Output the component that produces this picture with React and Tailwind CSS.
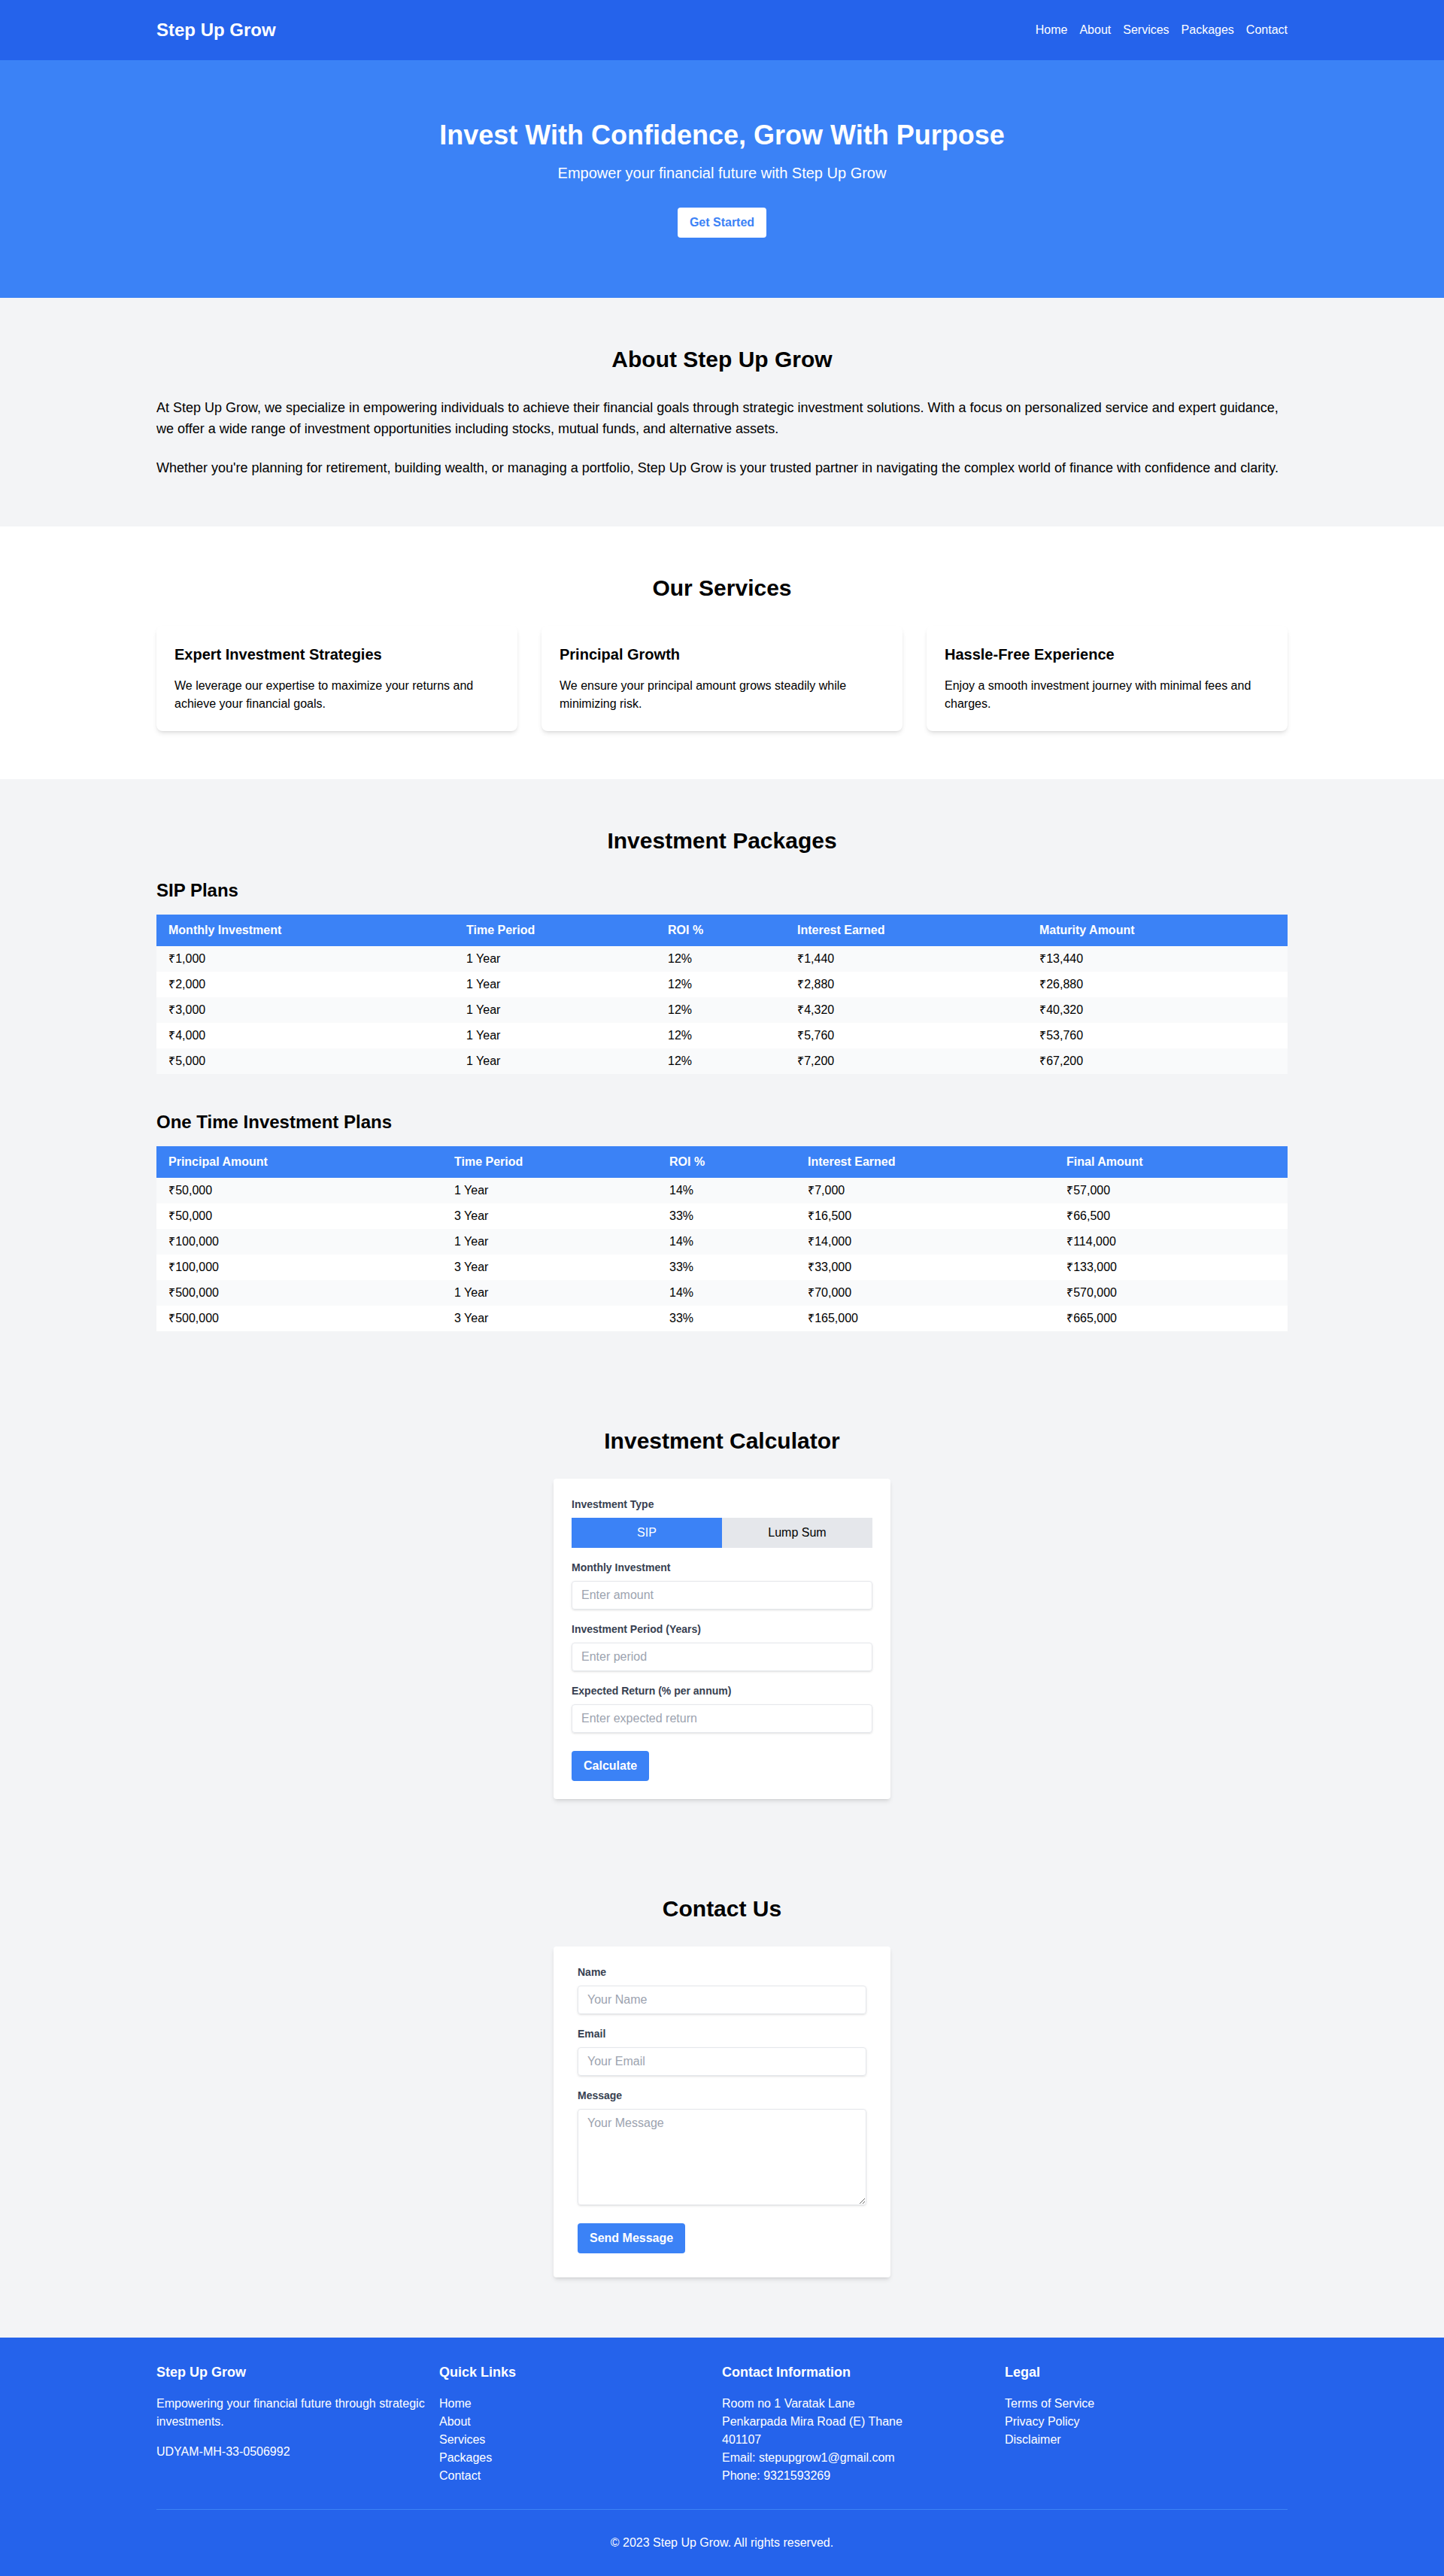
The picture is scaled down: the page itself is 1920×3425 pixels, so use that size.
import { useState } from "react";

const sipPlans = [
  ["₹1,000", "1 Year", "12%", "₹1,440", "₹13,440"],
  ["₹2,000", "1 Year", "12%", "₹2,880", "₹26,880"],
  ["₹3,000", "1 Year", "12%", "₹4,320", "₹40,320"],
  ["₹4,000", "1 Year", "12%", "₹5,760", "₹53,760"],
  ["₹5,000", "1 Year", "12%", "₹7,200", "₹67,200"],
];

const oneTimePlans = [
  ["₹50,000", "1 Year", "14%", "₹7,000", "₹57,000"],
  ["₹50,000", "3 Year", "33%", "₹16,500", "₹66,500"],
  ["₹100,000", "1 Year", "14%", "₹14,000", "₹114,000"],
  ["₹100,000", "3 Year", "33%", "₹33,000", "₹133,000"],
  ["₹500,000", "1 Year", "14%", "₹70,000", "₹570,000"],
  ["₹500,000", "3 Year", "33%", "₹165,000", "₹665,000"],
];

const services = [
  {
    title: "Expert Investment Strategies",
    text: "We leverage our expertise to maximize your returns and achieve your financial goals.",
  },
  {
    title: "Principal Growth",
    text: "We ensure your principal amount grows steadily while minimizing risk.",
  },
  {
    title: "Hassle-Free Experience",
    text: "Enjoy a smooth investment journey with minimal fees and charges.",
  },
];

const inputClass =
  "block shadow appearance-none border border-[#e5e7eb] rounded w-full py-2 px-3 text-[#374151] leading-tight placeholder:text-[#9ca3af] focus:outline-none";

function PlanTable({ headers, widths, rows }) {
  return (
    <table className="w-full table-fixed border-collapse">
      <thead>
        <tr className="bg-[#3b82f6] text-white">
          {headers.map((header, i) => (
            <th key={header} className={`${widths[i]} py-3 px-4 text-left font-bold leading-[18px]`}>
              {header}
            </th>
          ))}
        </tr>
      </thead>
      <tbody>
        {rows.map((row, r) => (
          <tr key={r} className={r % 2 === 0 ? "bg-[#f9fafb]" : "bg-white"}>
            {row.map((cell, c) => (
              <td key={c} className="py-2 px-4 leading-[18px]">
                {cell}
              </td>
            ))}
          </tr>
        ))}
      </tbody>
    </table>
  );
}

function Field({ label, placeholder }) {
  return (
    <div className="mb-4">
      <label className="block text-[#374151] text-sm font-bold mb-2">{label}</label>
      <input type="text" placeholder={placeholder} className={inputClass} />
    </div>
  );
}

export default function App() {
  const [type, setType] = useState("sip");

  return (
    <div className="font-['Liberation_Sans',Arial,'Noto_Sans',sans-serif] text-black">
      <header className="bg-[#2563eb] text-white py-6">
        <div className="max-w-[1536px] mx-auto px-4 flex justify-between items-center">
          <h1 className="text-2xl font-bold">Step Up Grow</h1>
          <nav className="flex gap-4">
            {["Home", "About", "Services", "Packages", "Contact"].map((link) => (
              <a key={link} href={`#${link.toLowerCase()}`} className="hover:text-blue-200">
                {link}
              </a>
            ))}
          </nav>
        </div>
      </header>

      <section id="home" className="bg-[#3b82f6] text-white py-20 text-center">
        <div className="max-w-[1536px] mx-auto px-4">
          <h2 className="text-4xl font-bold mb-4">Invest With Confidence, Grow With Purpose</h2>
          <p className="text-xl mb-8">Empower your financial future with Step Up Grow</p>
          <a href="#packages" className="inline-block bg-white text-[#3b82f6] font-bold px-4 py-2 rounded">
            Get Started
          </a>
        </div>
      </section>

      <section id="about" className="bg-[#f3f4f6] py-16">
        <div className="max-w-[1536px] mx-auto px-4">
          <h2 className="text-3xl font-bold text-center mb-8">About Step Up Grow</h2>
          <p className="text-lg mb-6">
            At Step Up Grow, we specialize in empowering individuals to achieve their financial goals through
            strategic investment solutions. With a focus on personalized service and expert guidance, we offer a wide
            range of investment opportunities including stocks, mutual funds, and alternative assets.
          </p>
          <p className="text-lg">
            Whether you're planning for retirement, building wealth, or managing a portfolio, Step Up Grow is your
            trusted partner in navigating the complex world of finance with confidence and clarity.
          </p>
        </div>
      </section>

      <section id="services" className="bg-white py-16">
        <div className="max-w-[1536px] mx-auto px-4">
          <h2 className="text-3xl font-bold text-center mb-8">Our Services</h2>
          <div className="grid grid-cols-3 gap-8">
            {services.map((service) => (
              <div key={service.title} className="bg-white rounded-lg shadow-md p-6">
                <h3 className="text-xl font-bold mb-4">{service.title}</h3>
                <p>{service.text}</p>
              </div>
            ))}
          </div>
        </div>
      </section>

      <section id="packages" className="bg-[#f3f4f6] py-16">
        <div className="max-w-[1536px] mx-auto px-4">
          <h2 className="text-3xl font-bold text-center mb-8">Investment Packages</h2>
          <div className="mb-12">
            <h3 className="text-2xl font-bold mb-4">SIP Plans</h3>
            <PlanTable
              headers={["Monthly Investment", "Time Period", "ROI %", "Interest Earned", "Maturity Amount"]}
              widths={["w-[396px]", "w-[268px]", "w-[172px]", "w-[322px]", "w-[346px]"]}
              rows={sipPlans}
            />
          </div>
          <div>
            <h3 className="text-2xl font-bold mb-4">One Time Investment Plans</h3>
            <PlanTable
              headers={["Principal Amount", "Time Period", "ROI %", "Interest Earned", "Final Amount"]}
              widths={["w-[380px]", "w-[286px]", "w-[184px]", "w-[344px]", "w-[310px]"]}
              rows={oneTimePlans}
            />
          </div>
        </div>
      </section>

      <section id="calculator" className="bg-[#f3f4f6] py-16">
        <div className="max-w-[1536px] mx-auto px-4">
          <h2 className="text-3xl font-bold text-center mb-8">Investment Calculator</h2>
          <div className="max-w-md mx-auto bg-white rounded shadow-md p-6">
            <div className="mb-4">
              <label className="block text-[#374151] text-sm font-bold mb-2">Investment Type</label>
              <div className="flex">
                <button
                  type="button"
                  onClick={() => setType("sip")}
                  className={`flex-1 py-2 ${type === "sip" ? "bg-[#3b82f6] text-white" : "bg-[#e5e7eb] text-black"}`}
                >
                  SIP
                </button>
                <button
                  type="button"
                  onClick={() => setType("lump")}
                  className={`flex-1 py-2 ${type === "lump" ? "bg-[#3b82f6] text-white" : "bg-[#e5e7eb] text-black"}`}
                >
                  Lump Sum
                </button>
              </div>
            </div>
            <Field
              label={type === "sip" ? "Monthly Investment" : "Investment Amount"}
              placeholder="Enter amount"
            />
            <Field label="Investment Period (Years)" placeholder="Enter period" />
            <div className="mb-6">
              <label className="block text-[#374151] text-sm font-bold mb-2">Expected Return (% per annum)</label>
              <input type="text" placeholder="Enter expected return" className={inputClass} />
            </div>
            <button type="button" className="bg-[#3b82f6] text-white font-bold px-4 py-2 rounded">
              Calculate
            </button>
          </div>
        </div>
      </section>

      <section id="contact" className="bg-[#f3f4f6] py-16">
        <div className="max-w-[1536px] mx-auto px-4">
          <h2 className="text-3xl font-bold text-center mb-8">Contact Us</h2>
          <form className="max-w-md mx-auto bg-white shadow-md rounded px-8 pt-6 pb-8 mb-4">
            <Field label="Name" placeholder="Your Name" />
            <Field label="Email" placeholder="Your Email" />
            <div className="mb-6">
              <label className="block text-[#374151] text-sm font-bold mb-2">Message</label>
              <textarea placeholder="Your Message" className={`${inputClass} h-32`} />
            </div>
            <button type="button" className="bg-[#3b82f6] text-white font-bold px-4 py-2 rounded">
              Send Message
            </button>
          </form>
        </div>
      </section>

      <footer className="bg-[#2563eb] text-white py-8">
        <div className="max-w-[1536px] mx-auto px-4">
          <div className="grid grid-cols-4">
            <div>
              <h3 className="text-lg font-bold mb-4">Step Up Grow</h3>
              <p>Empowering your financial future through strategic investments.</p>
              <p className="mt-4">UDYAM-MH-33-0506992</p>
            </div>
            <div>
              <h3 className="text-lg font-bold mb-4">Quick Links</h3>
              <ul>
                {["Home", "About", "Services", "Packages", "Contact"].map((link) => (
                  <li key={link}>
                    <a href={`#${link.toLowerCase()}`}>{link}</a>
                  </li>
                ))}
              </ul>
            </div>
            <div>
              <h3 className="text-lg font-bold mb-4">Contact Information</h3>
              <p>
                Room no 1 Varatak Lane
                <br />
                Penkarpada Mira Road (E) Thane
                <br />
                401107
              </p>
              <p>Email: stepupgrow1@gmail.com</p>
              <p>Phone: 9321593269</p>
            </div>
            <div>
              <h3 className="text-lg font-bold mb-4">Legal</h3>
              <ul>
                <li>Terms of Service</li>
                <li>Privacy Policy</li>
                <li>Disclaimer</li>
              </ul>
            </div>
          </div>
          <div className="border-t border-[#3b82f6] mt-8 pt-8 text-center">
            <p>© 2023 Step Up Grow. All rights reserved.</p>
          </div>
        </div>
      </footer>
    </div>
  );
}
